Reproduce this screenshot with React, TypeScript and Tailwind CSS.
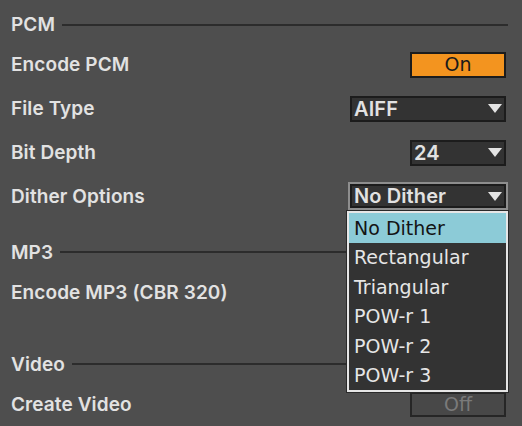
import React from "react";

const labelFont = "font-['Inter',sans-serif] font-semibold text-[19px] tracking-[0.1px] text-[#e2e2e2]";
const valueFont = "font-['Inter',sans-serif] font-semibold text-[20px] tracking-[0.1px] text-[#e2e2e2]";
const itemFont = "font-['DejaVu_Sans',sans-serif] text-[19px]";

function Tri({ color = "#e4e4e4" }: { color?: string }) {
  return (
    <svg width="14" height="9" viewBox="0 0 14 9" className="shrink-0">
      <polygon points="0,0 14,0 7,9" fill={color} />
    </svg>
  );
}

function Header({ title, mt }: { title: string; mt: string }) {
  return (
    <div className={`flex items-center h-[20px] mb-[8px] pr-[14px] ${mt}`}>
      <span className={`${labelFont} leading-none`}>{title}</span>
      <div className="flex-1 h-[2px] bg-[#2c2c2c] ml-[7px]" />
    </div>
  );
}

function Row({ label, children }: { label: string; children?: React.ReactNode }) {
  return (
    <div className="flex items-center justify-between h-[44px] pr-[16px]">
      <span className={`${labelFont} leading-none`}>{label}</span>
      {children}
    </div>
  );
}

function Select({ value, w }: { value: string; w: string }) {
  return (
    <div
      className={`${w} h-[26px] border-2 border-[#1c1c1c] bg-[#333333] flex items-center justify-between pl-[2px] pr-[2px]`}
    >
      <span className={`${valueFont} leading-none`}>{value}</span>
      <Tri />
    </div>
  );
}

const items = ["No Dither", "Rectangular", "Triangular", "POW-r 1", "POW-r 2", "POW-r 3"];

export default function App() {
  return (
    <div className="w-[522px] h-[426px] bg-[#4e4e4e] pl-[11px] overflow-hidden flex flex-col">
      <Header title="PCM" mt="mt-[15px]" />
      <Row label="Encode PCM">
        <div className="w-[96px] h-[26px] border-2 border-[#1c1c1c] bg-[#f3941f] flex items-center justify-center">
          <span className={`${itemFont} leading-none text-[#1a1a1a]`}>On</span>
        </div>
      </Row>
      <Row label="File Type">
        <Select value="AIFF" w="w-[156px]" />
      </Row>
      <Row label="Bit Depth">
        <Select value="24" w="w-[96px]" />
      </Row>
      <Row label="Dither Options">
        <div className="relative -mr-[2px] border-2 border-[#8e8e8e]">
          <div className="w-[156px] h-[24px] border-2 border-[#1c1c1c] bg-[#333333] flex items-center justify-between pl-[2px] pr-[2px]">
            <span className={`${valueFont} leading-none`}>No Dither</span>
            <Tri />
          </div>
          <div className="absolute left-[-3px] top-[27px] w-[161px] h-[181px] border-2 border-[#e6e6e6] bg-[#333333] flex flex-col z-10 shadow-[0_0_0_1px_#2a2a2a]">
            {items.map((it, i) => (
              <div
                key={it}
                className={`h-[29.5px] flex items-center pl-[5px] ${itemFont} leading-none ${
                  i === 0 ? "bg-[#8ccbd7] text-[#141414]" : "text-[#e6e6e6]"
                }`}
              >
                {it}
              </div>
            ))}
          </div>
        </div>
      </Row>
      <Header title="MP3" mt="mt-[24px]" />
      <Row label="Encode MP3 (CBR 320)" />
      <Header title="Video" mt="mt-[40px]" />
      <Row label="Create Video">
        <div className="w-[96px] h-[25px] border-2 border-[#262626] bg-[#484848] flex items-center justify-center">
          <span className={`${itemFont} leading-none text-[#7a7a7a]`}>Off</span>
        </div>
      </Row>
    </div>
  );
}
